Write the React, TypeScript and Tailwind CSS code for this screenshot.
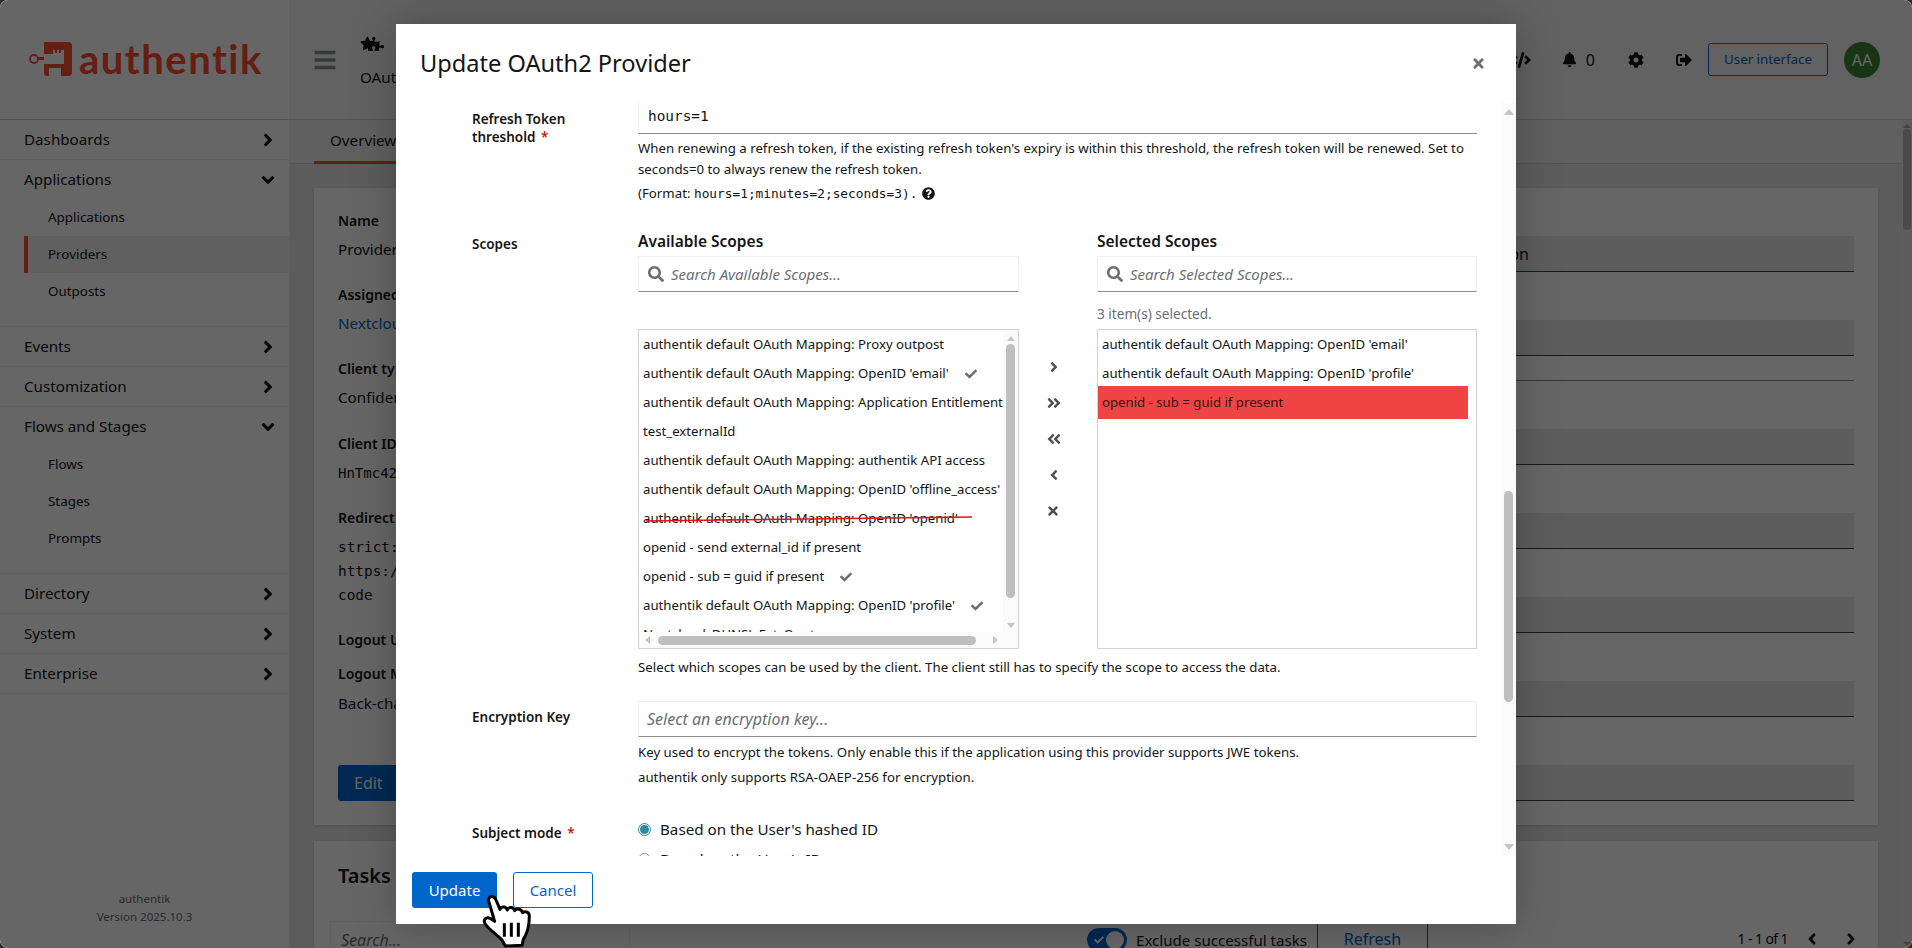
import { ReactNode } from "react";
import {
  FaAngleDown,
  FaAngleLeft,
  FaAngleRight,
  FaAngleDoubleLeft,
  FaAngleDoubleRight,
  FaBars,
  FaBell,
  FaCheck,
  FaCode,
  FaCog,
  FaPuzzlePiece,
  FaQuestionCircle,
  FaSearch,
  FaSignOutAlt,
  FaStar,
  FaTimes,
} from "react-icons/fa";

type NavItem = { label: string; open?: boolean; children?: { label: string; active?: boolean }[] };

const nav: NavItem[] = [
  { label: "Dashboards" },
  {
    label: "Applications",
    open: true,
    children: [{ label: "Applications" }, { label: "Providers", active: true }, { label: "Outposts" }],
  },
  { label: "Events" },
  { label: "Customization" },
  {
    label: "Flows and Stages",
    open: true,
    children: [{ label: "Flows" }, { label: "Stages" }, { label: "Prompts" }],
  },
  { label: "Directory" },
  { label: "System" },
  { label: "Enterprise" },
];

function Logo() {
  return (
    <div className="flex items-center h-[119px] pl-[29px] pb-[1px]">
      <svg width="44" height="36" viewBox="0 0 44 36" className="shrink-0">
        <circle cx="5" cy="18" r="4" fill="none" stroke="#fd4b2d" strokeWidth="1.8" />
        <path d="M9 16h6v3H9z" fill="#fd4b2d" />
        <path
          d="M15 1h24a4 4 0 0 1 4 4v26a4 4 0 0 1-4 4h-7v-8H20v8h-2a3 3 0 0 1-3-3v-9h20V9h-3v3h-2V9h-2v3h-2V9h-2v4H15z"
          fill="#fd4b2d"
        />
      </svg>
      <span className="ml-[6px] font-['Lato',sans-serif] font-bold text-[40px] leading-none tracking-[1.5px] text-[#fd4b2d]">
        authentik
      </span>
    </div>
  );
}

function Sidebar() {
  return (
    <aside className="w-[290px] shrink-0 flex flex-col bg-white border-r border-[#eeeeee]">
      <Logo />
      <nav className="border-t border-[#d2d2d2]">
        {nav.map((item) => (
          <div key={item.label} className="border-b border-[#f0f0f0]">
            <div className="h-[39px] flex items-center justify-between pl-6 pr-[11px] text-[15.2px] text-[#151515]">
              <span>{item.label}</span>
              {item.open ? <FaAngleDown size={20} /> : <FaAngleRight size={20} />}
            </div>
            {item.children && (
              <div className="pb-[16px]">
                {item.children.map((c) => (
                  <div
                    key={c.label}
                    className={
                      c.active
                        ? "h-[37px] ml-6 pl-5 flex items-center text-[13.4px] text-[#151515] bg-[#f0f0f0] border-l-4 border-[#fd4b2d]"
                        : "h-[37px] pl-12 flex items-center text-[13.4px] text-[#151515]"
                    }
                  >
                    {c.label}
                  </div>
                ))}
              </div>
            )}
          </div>
        ))}
      </nav>
      <div className="mt-auto pb-[22px] text-center text-[11.5px] leading-[18px] text-[#6a6e73]">
        <div>authentik</div>
        <div>Version 2025.10.3</div>
      </div>
    </aside>
  );
}

function TopBar() {
  return (
    <header className="h-[120px] shrink-0 flex items-center bg-[#f4f4f4] border-b border-[#d2d2d2] pl-[23px] pr-8">
      <FaBars size={24} className="text-[#8a8d90] shrink-0" />
      <div className="ml-[23px] self-start pt-[35px] flex flex-col">
        <div className="flex items-center h-[17px] text-[#151515]">
          <FaStar size={15} />
          <FaPuzzlePiece size={16} className="-ml-[7px]" />
        </div>
        <div className="mt-[13px] leading-6 text-[15.2px] text-[#151515]">OAuth2 Provider</div>
      </div>
      <div className="ml-auto flex items-center text-[#151515]">
        <FaCode size={20} />
        <FaBell size={15} className="ml-[31px]" />
        <span className="ml-[9px] text-base text-[#151515]">0</span>
        <FaCog size={16} className="ml-[33px]" />
        <FaSignOutAlt size={16} className="ml-[32px]" />
        <button className="ml-[16px] w-[120px] h-[33px] rounded-[3px] border border-[#0066cc] text-[13.3px] text-[#0066cc]">
          User interface
        </button>
        <div className="ml-[16px] w-[36px] h-[36px] rounded-full bg-[#3e8635] flex items-center justify-center text-base text-white">
          AA
        </div>
      </div>
    </header>
  );
}

function Detail({ label, children, gap }: { label: string; children?: ReactNode; gap: string }) {
  return (
    <div className={gap}>
      <div className="text-sm font-semibold leading-[21px] text-[#151515]">{label}</div>
      {children}
    </div>
  );
}

function InfoCard() {
  return (
    <section className="relative h-[637px] bg-white shadow-sm flex pl-6 pr-6">
      <div className="w-[500px] pt-[22px] whitespace-nowrap">
        <Detail label="Name" gap="mb-[23px]">
          <div className="mt-[6px] leading-6 text-[15.2px] text-[#151515]">Provider for Nextcloud</div>
        </Detail>
        <Detail label="Assigned to application" gap="mb-[23px]">
          <div className="mt-[6px] leading-6 text-[15.2px] text-[#0066cc]">Nextcloud</div>
        </Detail>
        <Detail label="Client type" gap="mb-[24px]">
          <div className="mt-[6px] leading-6 text-[15.2px] text-[#151515]">Confidential</div>
        </Detail>
        <Detail label="Client ID" gap="mb-[22px]">
          <div className="mt-[7px] leading-6 text-sm font-['DejaVu_Sans_Mono',monospace] text-[#151515]">
            HnTmc42xKq
          </div>
        </Detail>
        <Detail label="Redirect URIs" gap="mb-[22px]">
          <div className="mt-[7px] leading-6 text-[14.4px] font-['DejaVu_Sans_Mono',monospace] text-[#151515]">
            <div>strict:</div>
            <div>https://</div>
            <div>code</div>
          </div>
        </Detail>
        <Detail label="Logout URI" gap="mb-[13px]" />
        <Detail label="Logout Method" gap="mb-[50px]">
          <div className="mt-[7px] leading-6 text-[15.2px] text-[#151515]">Back-channel</div>
        </Detail>
        <button className="ml-0 w-[120px] h-[36px] rounded-[3px] bg-[#0066cc] text-left pl-4 text-base text-white">
          Edit
        </button>
      </div>
      <div className="flex-1 pt-[48px]">
        <Band>
          <span className="block pr-[325px] text-right text-base whitespace-nowrap text-[#151515]">
            openid-configuration
          </span>
        </Band>
        <div className="mt-[48px]">
          <Band />
          <div className="h-[25px] border-b border-[#8a8d90]" />
        </div>
        <div className="mt-[48px]">
          <Band />
        </div>
        <div className="mt-[48px]">
          <Band />
        </div>
        <div className="mt-[48px]">
          <Band />
        </div>
        <div className="mt-[48px]">
          <Band />
        </div>
        <div className="mt-[48px]">
          <Band />
        </div>
      </div>
    </section>
  );
}

function Band({ children }: { children?: ReactNode }) {
  return (
    <div className="h-[36px] flex items-center bg-[#e9e9e9] border-b border-[#404040]">
      <div className="flex-1">{children}</div>
    </div>
  );
}

function TasksCard() {
  return (
    <section className="mt-[16px] h-[300px] bg-white shadow-sm">
      <div className="pl-6 pt-[22px] h-[80px] text-xl font-semibold leading-[26px] text-[#151515]">Tasks</div>
      <div className="flex items-start pl-4 pr-[18px]">
        <div className="w-[300px] h-[36px] border border-[#f0f0f0] border-b-[#8a8d90] pl-[10px] pt-[6px] italic text-base text-[#6a6e73]">
          Search...
        </div>
        <div className="ml-[457px] mt-[7px] w-[40px] h-[24px] rounded-full bg-[#0066cc] relative shrink-0">
          <FaCheck size={10} className="absolute left-[7px] top-[7px] text-white" />
          <div className="absolute right-[3px] top-[3px] w-[18px] h-[18px] rounded-full bg-white" />
        </div>
        <span className="ml-[9px] mt-[7px] w-[173px] shrink-0 text-[15.1px] leading-6 whitespace-nowrap text-[#151515]">
          Exclude successful tasks
        </span>
        <button className="ml-[8px] w-[111px] h-[36px] shrink-0 border border-[#0066cc] rounded-[3px] text-base text-[#0066cc]">
          Refresh
        </button>
        <div className="ml-auto mt-[8px] flex items-center text-sm tracking-[-0.6px] text-[#151515]">
          <span>1 - 1 of 1</span>
          <FaAngleLeft size={18} className="ml-[15px]" />
          <FaAngleRight size={18} className="ml-[21px]" />
        </div>
      </div>
    </section>
  );
}

function MainArea() {
  return (
    <main className="flex-1 min-w-0 flex flex-col overflow-hidden">
      <TopBar />
      <div className="flex-1 min-h-0 flex">
        <div className="flex-1 min-w-0">
          <div className="h-[44px] pl-6 bg-[#f0f0f0] border-b border-[#d2d2d2]">
            <div className="h-[44px] w-[110px] pl-4 flex items-center text-[15.2px] text-[#151515] border-b-[3px] border-[#fd4b2d]">
              Overview
            </div>
          </div>
          <div className="px-6 pt-6">
            <InfoCard />
            <TasksCard />
          </div>
        </div>
        <div className="w-[10px] shrink-0 bg-[#e9e9e9] flex flex-col items-center pt-[4px] pb-[2px]">
          <div className="border-x-[4px] border-x-transparent border-b-[4px] border-b-[#a3a3a3]" />
          <div className="mt-[1px] w-[8px] h-[101px] rounded-full bg-[#b8b8b8]" />
          <div className="mt-auto border-x-[4px] border-x-transparent border-t-[4px] border-t-[#a3a3a3]" />
        </div>
      </div>
    </main>
  );
}

function Required() {
  return <span className="ml-[2px] text-[#c9190b]">*</span>;
}

function FormRow({ label, className, children }: { label: ReactNode; className?: string; children: ReactNode }) {
  return (
    <div className={`grid grid-cols-[166px_839px] pl-[76px] ${className ?? ""}`}>
      <div className="text-[13.5px] font-semibold leading-[18px] text-[#151515]">{label}</div>
      <div>{children}</div>
    </div>
  );
}

function Help({ children }: { children: ReactNode }) {
  return <div className="text-[13.25px] leading-[21px] text-[#151515]">{children}</div>;
}

function SearchBox({ placeholder }: { placeholder: string }) {
  return (
    <div className="h-[36px] flex items-center border border-[#f0f0f0] border-b-[#8a8d90] pl-[9px]">
      <FaSearch size={16} className="text-[#6a6e73] shrink-0" />
      <span className="ml-[7px] italic text-[15px] text-[#6a6e73]">{placeholder}</span>
    </div>
  );
}

type Scope = { label: string; checked?: boolean; struck?: boolean };

const available: Scope[] = [
  { label: "authentik default OAuth Mapping: Proxy outpost" },
  { label: "authentik default OAuth Mapping: OpenID 'email'", checked: true },
  { label: "authentik default OAuth Mapping: Application Entitlements" },
  { label: "test_externalId" },
  { label: "authentik default OAuth Mapping: authentik API access" },
  { label: "authentik default OAuth Mapping: OpenID 'offline_access'" },
  { label: "authentik default OAuth Mapping: OpenID 'openid'", struck: true },
  { label: "openid - send external_id if present" },
  { label: "openid - sub = guid if present", checked: true },
  { label: "authentik default OAuth Mapping: OpenID 'profile'", checked: true },
  { label: "Nextcloud_DUNSL Ext_Quota" },
];

function ScopeRow({ scope }: { scope: Scope }) {
  return (
    <div className="h-[29px] flex items-center pl-[4px] whitespace-nowrap text-[13.2px] text-[#151515]">
      <span>{scope.label}</span>
      {scope.checked && <FaCheck size={12} className="ml-[16px] shrink-0 text-[#6a6e73]" />}
    </div>
  );
}

function AvailableList() {
  return (
    <div className="relative h-[320px] border border-[#d2d2d2] flex flex-col">
      <div className="flex-1 min-h-0 flex">
        <div className="flex-1 min-w-0 overflow-hidden">
          {available.map((s) => (
            <ScopeRow key={s.label} scope={s} />
          ))}
        </div>
        <div className="w-[15px] shrink-0 bg-[#fafafa] flex flex-col items-center pt-[6px] pb-[4px]">
          <div className="border-x-[4px] border-x-transparent border-b-[5px] border-b-[#c4c4c4]" />
          <div className="mt-[3px] w-[9px] h-[254px] rounded-full bg-[#bfbfbf]" />
          <div className="mt-auto border-x-[4px] border-x-transparent border-t-[5px] border-t-[#c4c4c4]" />
        </div>
      </div>
      <div className="h-[16px] shrink-0 bg-[#fafafa] flex items-center pl-[6px] pr-[20px]">
        <div className="border-y-[4px] border-y-transparent border-r-[5px] border-r-[#c4c4c4]" />
        <div className="ml-[8px] w-[318px] h-[9px] rounded-full bg-[#bfbfbf]" />
        <div className="ml-auto border-y-[4px] border-y-transparent border-l-[5px] border-l-[#c4c4c4]" />
      </div>
      <svg width="330" height="6" className="absolute left-[7px] top-[186px]">
        <line x1="0" y1="5" x2="326" y2="1" stroke="#e0131a" strokeWidth="1.5" />
      </svg>
    </div>
  );
}

function SelectedList() {
  return (
    <div className="h-[320px] border border-[#d2d2d2] pr-[8px]">
      <ScopeRow scope={{ label: "authentik default OAuth Mapping: OpenID 'email'" }} />
      <ScopeRow scope={{ label: "authentik default OAuth Mapping: OpenID 'profile'" }} />
      <div className="h-[33px] -my-[2px] flex items-center pl-[4px] whitespace-nowrap text-[13.2px] bg-[#ef4444] text-[#3a1012]">
        openid - sub = guid if present
      </div>
    </div>
  );
}

function TransferButtons() {
  return (
    <div className="pt-[121px] pl-[27px] text-[#4f5255]">
      <div className="h-9 flex items-center"><FaAngleRight size={16} /></div>
      <div className="h-9 flex items-center"><FaAngleDoubleRight size={16} /></div>
      <div className="h-9 flex items-center"><FaAngleDoubleLeft size={16} /></div>
      <div className="h-9 flex items-center"><FaAngleLeft size={16} /></div>
      <div className="h-9 flex items-center"><FaTimes size={14} /></div>
    </div>
  );
}

function Radio({ on, label }: { on?: boolean; label: string }) {
  return (
    <div className="flex items-center h-[24px] mb-[6px]">
      <div
        className={
          on
            ? "w-[13px] h-[13px] rounded-full border border-[#2b8a9c] flex items-center justify-center"
            : "w-[13px] h-[13px] rounded-full border border-[#8a8d90]"
        }
      >
        {on && <div className="w-[9px] h-[9px] rounded-full bg-[#2b8a9c]" />}
      </div>
      <span className="ml-[9px] text-[15.2px] text-[#151515]">{label}</span>
    </div>
  );
}

function Modal() {
  return (
    <div className="w-[1120px] h-[900px] bg-white flex flex-col shadow-[0_0_40px_rgba(0,0,0,0.25)]">
      <div className="h-[79px] shrink-0 flex items-center justify-between pl-6 pr-[30px]">
        <h1 className="text-[23.6px] text-[#151515]">Update OAuth2 Provider</h1>
        <FaTimes size={15} className="text-[#6a6e73]" />
      </div>

      <div className="h-[753px] shrink-0 flex">
        <div className="flex-1 min-w-0 overflow-hidden flex flex-col gap-6">
          <FormRow label={<span className="block pt-[7px]">Refresh Token<br />threshold <Required /></span>}>
            <div className="h-[31px] border-l border-[#f0f0f0] border-b border-b-[#8a8d90] pl-[9px] pt-[3px] font-['DejaVu_Sans_Mono',monospace] text-[14.4px] text-[#151515]">
              hours=1
            </div>
            <div className="mt-[4px]">
              <Help>
                When renewing a refresh token, if the existing refresh token's expiry is within this threshold, the
                refresh token will be renewed. Set to seconds=0 to always renew the refresh token.
              </Help>
            </div>
            <div className="mt-[3px] flex items-center">
              <Help>
                (Format: <span className="font-['DejaVu_Sans_Mono',monospace] text-[12.8px]">hours=1;minutes=2;seconds=3).</span>
              </Help>
              <FaQuestionCircle size={13} className="ml-[5px] text-[#151515]" />
            </div>
          </FormRow>

          <FormRow label={<span className="block pt-[7px]">Scopes</span>}>
            <div className="grid grid-cols-[381px_78px_380px]">
              <div>
                <div className="h-[24px] mb-[4px] text-[15.5px] leading-[26px] font-semibold text-[#151515]">Available Scopes</div>
                <SearchBox placeholder="Search Available Scopes..." />
                <div className="h-[37px]" />
                <AvailableList />
              </div>
              <TransferButtons />
              <div>
                <div className="h-[24px] mb-[4px] text-[15.5px] leading-[26px] font-semibold text-[#151515]">Selected Scopes</div>
                <SearchBox placeholder="Search Selected Scopes..." />
                <div className="h-[37px] pt-[12px] text-[13.6px] leading-5 text-[#6a6e73]">3 item(s) selected.</div>
                <SelectedList />
              </div>
            </div>
            <div className="mt-[8px]">
              <Help>Select which scopes can be used by the client. The client still has to specify the scope to access the data.</Help>
            </div>
          </FormRow>

          <FormRow className="-mt-px" label={<span className="block pt-[7px]">Encryption Key</span>}>
            <div className="h-[36px] flex items-center border border-[#f0f0f0] border-b-[#8a8d90] pl-[8px] italic text-[16px] text-[#6a6e73]">
              Select an encryption key...
            </div>
            <div className="mt-[5px]">
              <Help>Key used to encrypt the tokens. Only enable this if the application using this provider supports JWE tokens.</Help>
            </div>
            <div className="mt-1">
              <Help>authentik only supports RSA-OAEP-256 for encryption.</Help>
            </div>
          </FormRow>

          <FormRow className="mt-[5px]" label={<span className="block pt-[7px]">Subject mode <Required /></span>}>
            <div>
              <Radio on label="Based on the User's hashed ID" />
              <Radio label="Based on the User's ID" />
            </div>
          </FormRow>
        </div>
        <div className="w-[15px] shrink-0 bg-[#fafafa] flex flex-col items-center pt-[6px] pb-[6px]">
          <div className="border-x-[5px] border-x-transparent border-b-[6px] border-b-[#c4c4c4]" />
          <div className="mt-[376px] w-[9px] h-[211px] rounded-full bg-[#bfbfbf]" />
          <div className="mt-auto border-x-[5px] border-x-transparent border-t-[6px] border-t-[#c4c4c4]" />
        </div>
      </div>

      <div className="flex-1 flex items-start gap-4 pl-4 pt-[16px]">
        <button className="w-[85px] h-[36px] rounded-[3px] bg-[#0066cc] text-[15px] text-white">Update</button>
        <button className="w-[80px] h-[36px] rounded-[3px] border border-[#0066cc] text-[15px] text-[#0066cc]">Cancel</button>
      </div>
    </div>
  );
}

function HandCursor() {
  return (
    <svg width="80" height="68" viewBox="0 0 240 204" className="absolute left-[470px] top-[880px]">
      <path
        d="M55 60C58 46 72 46 78 60L90 88C94 78 108 78 112 90C116 80 130 80 134 92C140 84 154 86 158 98C166 92 178 96 178 108C178 132 172 160 160 178L156 196L106 198L96 180C84 166 60 152 46 132C38 120 48 108 62 116L74 124Z"
        fill="#ffffff"
        stroke="#000000"
        strokeWidth="9"
        strokeLinejoin="round"
      />
      <path d="M103 130v40M124 128v42M145 128v42" stroke="#000000" strokeWidth="9" fill="none" />
    </svg>
  );
}

export default function App() {
  return (
    <div className="h-screen bg-[#2a2a2a]">
      <div className="relative h-full rounded-lg overflow-hidden flex bg-[#e6e6e6] font-['Noto_Sans',sans-serif]">
        <Sidebar />
        <MainArea />
        <div className="absolute inset-0 bg-black/60 flex items-center justify-center">
          <Modal />
        </div>
        <HandCursor />
      </div>
    </div>
  );
}
